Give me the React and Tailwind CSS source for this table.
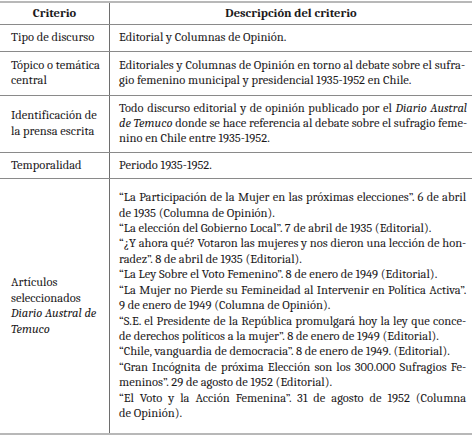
import React from "react";

const Line = ({ j, children }) => (
  <span
    className={
      j
        ? "block whitespace-nowrap text-justify [text-align-last:justify]"
        : "block whitespace-nowrap"
    }
  >
    {children}
  </span>
);

const rows = [
  {
    label: ["Tipo de discurso"],
    lines: [{ t: "Editorial y Columnas de Opinión." }],
    pad: "py-[5px]",
  },
  {
    label: ["Tópico o temática", "central"],
    lines: [
      { t: "Editoriales y Columnas de Opinión en torno al debate sobre el sufra-", j: true },
      { t: "gio femenino municipal y presidencial 1935-1952 en Chile." },
    ],
    pad: "py-[6px]",
  },
  {
    label: ["Identificación de", "la prensa escrita"],
    lines: [
      {
        t: (
          <>
            Todo discurso editorial y de opinión publicado por el <i>Diario Austral</i>
          </>
        ),
        j: true,
      },
      {
        t: (
          <>
            <i>de Temuco</i> donde se hace referencia al debate sobre el sufragio feme-
          </>
        ),
        j: true,
      },
      { t: "nino en Chile entre 1935-1952." },
    ],
    pad: "py-[5px]",
  },
  {
    label: ["Temporalidad"],
    lines: [{ t: "Periodo 1935-1952." }],
    pad: "py-[5px]",
  },
  {
    label: [
      "Artículos",
      "seleccionados",
      <i key="d">Diario Austral de</i>,
      <i key="t">Temuco</i>,
    ],
    lines: [
      { t: "“La Participación de la Mujer en las próximas elecciones”. 6 de abril", j: true },
      { t: "de 1935 (Columna de Opinión)." },
      { t: "“La elección del Gobierno Local”. 7 de abril de 1935 (Editorial)." },
      { t: "“¿Y ahora qué? Votaron las mujeres y nos dieron una lección de hon-", j: true },
      { t: "radez”. 8 de abril de 1935 (Editorial)." },
      { t: "“La Ley Sobre el Voto Femenino”. 8 de enero de 1949 (Editorial)." },
      { t: "“La Mujer no Pierde su Femineidad al Intervenir en Política Activa”.", j: true },
      { t: "9 de enero de 1949 (Columna de Opinión)." },
      { t: "“S.E. el Presidente de la República promulgará hoy la ley que conce-", j: true },
      { t: "de derechos políticos a la mujer”. 8 de enero de 1949 (Editorial)." },
      { t: "“Chile, vanguardia de democracia”. 8 de enero de 1949. (Editorial)." },
      { t: "“Gran Incógnita de próxima Elección son los 300.000 Sufragios Fe-", j: true },
      { t: "meninos”. 29 de agosto de 1952 (Editorial)." },
      { t: "“El Voto y la Acción Femenina”. 31 de agosto de 1952 (Columna", j: true },
      { t: "de Opinión)." },
    ],
    pad: "pt-[11px] pb-[12px]",
  },
];

export default function App() {
  return (
    <div className="w-[475px] h-[435px] bg-white pt-[1px] font-serif text-[12.5px] leading-[15.4px] text-[#1c1a1b]">
      <div className="w-[472px] border-t-2 border-b-2 border-[#b8b8b8]">
        <div className="grid grid-cols-[110px_1fr] border-b border-[#8a8a8a] font-bold">
          <div className="border-r border-[#6e6e6e] py-[3px] text-center">Criterio</div>
          <div className="py-[3px] text-center">Descripción del criterio</div>
        </div>
        {rows.map((r, i) => (
          <div
            key={i}
            className={
              i < rows.length - 1
                ? "grid grid-cols-[110px_1fr] border-b border-[#8a8a8a]"
                : "grid grid-cols-[110px_1fr]"
            }
          >
            <div className="flex flex-col justify-center border-r border-[#6e6e6e] pl-[11px]">
              {r.label.map((l, k) => (
                <span key={k} className="block">
                  {l}
                </span>
              ))}
            </div>
            <div className={`pl-[9px] pr-[7px] ${r.pad}`}>
              {r.lines.map((l, k) => (
                <Line key={k} j={l.j}>
                  {l.t}
                </Line>
              ))}
            </div>
          </div>
        ))}
      </div>
    </div>
  );
}
